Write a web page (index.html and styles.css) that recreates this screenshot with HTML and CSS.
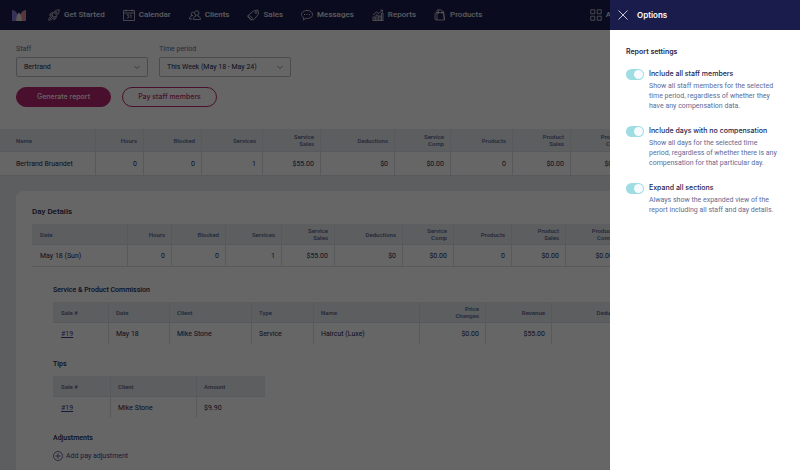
FILE: index.html
```html
<!DOCTYPE html>
<html lang="en">
<head>
<meta charset="utf-8">
<title>Staff compensation</title>
<link rel="stylesheet" href="styles.css">
</head>
<body>
<header class="topbar">
  <a class="logo" href="#" aria-label="Home">
    <svg viewBox="0 0 14 11"><path fill="#8b7fd6" d="M0 .5Q0 0 .6.100C4 1 6 3 7 11H0z"/><path fill="#d98a98" d="M14 .5Q14 0 13.400.1C10 1 8 3 7 11h7z"/><path fill="#e6dcd6" d="M7 2.500C5 4 4.200 7 4.200 11h5.600C9.800 7 9 4 7 2.500z"/></svg>
  </a>
  <nav class="nav">
    <a href="#"><svg class="icon" viewBox="0 0 24 24"><path d="M8 12c2-6 7-10 14.500-10.500C22.500 9 18 14 12 16.500zM8 12l-5 .5L6 8l4.500-.5M12 16.500l-.5 5 4.500-3 .5-4.500M6 15c-3 1-4 3-4.500 7.500C6 22 8 21 9 18M7 13.500l3.500 3.500M4.500 19.500L8 16"/><circle cx="16" cy="8" r="2.300"/></svg>Get Started</a>
    <a href="#"><svg class="icon" viewBox="0 0 24 24"><path d="M1 3h22v20H1zM1 8h22M6 1v4M18 1v4M7.500 11.500H11L9.500 14c3 0 2.500 5-2 4M14 12.500l2-1v7"/></svg>Calendar</a>
    <a href="#"><svg class="icon" viewBox="0 0 24 24"><circle cx="15.500" cy="8" r="4.500"/><path d="M8.500 21c0-4 2-5.500 5-6.500v-2M23 21c0-4-2-5.500-5-6.500v-2M8.500 21H23M8 13.500a3.500 3.500 0 1 1 1.500-6.500M1 20c0-3.500 1-5 4.500-6v-1.500M1 20h5"/></svg>Clients</a>
    <a href="#"><svg class="icon" viewBox="0 0 24 24"><path d="M2 13L13 4l9-2 1 8-9 11-4 1-8-6zM2 13l1 4 7 5M5 13l7 6"/><circle cx="18" cy="7" r="1.800"/></svg>Sales</a>
    <a href="#"><svg class="icon" viewBox="0 0 24 24"><path d="M12 3C5 3 1 6.500 1 11c0 3 2 5.500 5 6.800L4.500 22l5.500-3.200C18 19.500 23 16 23 11s-5-8-11-8z"/><path d="M7 10v2M12 10v2M17 10v2" stroke-width="2"/></svg>Messages</a>
    <a href="#"><svg class="icon" viewBox="0 0 24 24"><path d="M2 23v-7h4v7M8 23V12h4v11M14 23v-9h4v9M19 23V8h3v15M1 23h22M2 12l7-6 5 3 7-7M17 2h4v4"/></svg>Reports</a>
    <a href="#"><svg class="icon" viewBox="0 0 24 24"><path d="M6 7h13l2 15H6zM6 7L2 9v12l4 1M9 10V5c0-5 7-5 7 0v5M6 7V3c0-2 4-2 5-1M16 7l3-2 2 17"/></svg>Products</a>
  </nav>
  <a class="apps" href="#"><svg class="icon" viewBox="0 0 24 24"><path d="M1.500 1.500h8v8h-8zM14.500 1.500h8v8h-8zM1.500 14.500h8v8h-8zM14.500 14.500h8v8h-8z"/></svg>Apps</a>
</header>

<main>
  <form class="filters">
    <div class="fields">
      <div class="field">
        <label for="staff">Staff</label>
        <div class="picker">
          <select id="staff"><option>Bertrand</option></select>
          <svg viewBox="0 0 8 8"><path d="M1.500 3L4 5.500 6.500 3"/></svg>
        </div>
      </div>
      <div class="field">
        <label for="period">Time period</label>
        <div class="picker">
          <select id="period"><option>This Week (May 18 - May 24)</option></select>
          <svg viewBox="0 0 8 8"><path d="M1.500 3L4 5.500 6.500 3"/></svg>
        </div>
      </div>
    </div>
    <div class="actions">
      <button class="btn primary" type="button">Generate report</button>
      <button class="btn outline" type="button">Pay staff members</button>
    </div>
  </form>

  <table class="grid summary">
    <colgroup><col class="w96"><col class="w48"><col class="w58"><col class="w61"><col class="w58"><col class="w74"><col class="w56"><col class="w62"><col class="w58"><col class="w58"><col></colgroup>
    <thead><tr><th class="first">Name</th><th>Hours</th><th>Blocked</th><th>Services</th><th>Service<br>Sales</th><th>Deductions</th><th>Service<br>Comp</th><th>Products</th><th>Product<br>Sales</th><th>Product<br>Comp</th><td></td></tr></thead>
    <tbody><tr><td class="first">Bertrand Bruandet</td><td>0</td><td>0</td><td>1</td><td>$55.00</td><td>$0</td><td>$0.00</td><td>0</td><td>$0.00</td><td>$0.00</td><td></td></tr></tbody>
  </table>

  <section class="card">
    <h2>Day Details</h2>
    <table class="grid days">
      <colgroup><col class="w96"><col class="w44"><col class="w54"><col class="w56"><col class="w53"><col class="w68"><col class="w51"><col class="w58"><col class="w54"><col class="w54"><col></colgroup>
      <thead><tr><th class="first">Date</th><th>Hours</th><th>Blocked</th><th>Services</th><th>Service<br>Sales</th><th>Deductions</th><th>Service<br>Comp</th><th>Products</th><th>Product<br>Sales</th><th>Product<br>Comp</th><td></td></tr></thead>
      <tbody><tr><td class="first">May 18 (Sun)</td><td>0</td><td>0</td><td>1</td><td>$55.00</td><td>$0</td><td>$0.00</td><td>0</td><td>$0.00</td><td>$0.00</td><td></td></tr></tbody>
    </table>

    <div class="details">
      <section>
        <h3>Service &amp; Product Commission</h3>
        <table class="grid sub">
          <colgroup><col class="w56"><col class="w61"><col class="w82"><col class="w62"><col class="w106"><col class="w66"><col class="w66"><col class="w82"><col></colgroup>
          <thead><tr><th class="text">Sale #</th><th class="text">Date</th><th class="text">Client</th><th class="text">Type</th><th class="text">Name</th><th>Price<br>Changes</th><th>Revenue</th><th>Deductions</th><td></td></tr></thead>
          <tbody><tr><td class="text"><a href="#">#19</a></td><td class="text">May 18</td><td class="text">Mike Stone</td><td class="text">Service</td><td class="text">Haircut (Luxe)</td><td>$0.00</td><td>$55.00</td><td></td><td></td></tr></tbody>
        </table>
      </section>
      <section>
        <h3>Tips</h3>
        <table class="grid sub tips">
          <colgroup><col class="w58"><col class="w86"><col class="w68"></colgroup>
          <thead><tr><th class="text">Sale #</th><th class="text">Client</th><th class="text">Amount</th></tr></thead>
          <tbody><tr><td class="text"><a href="#">#19</a></td><td class="text">Mike Stone</td><td class="text">$9.90</td></tr></tbody>
        </table>
      </section>
      <section>
        <h3>Adjustments</h3>
        <button class="add" type="button"><svg viewBox="0 0 20 20"><circle cx="10" cy="10" r="9"/><path d="M10 5v10M5 10h10"/></svg>Add pay adjustment</button>
      </section>
    </div>
  </section>
</main>

<div class="scrim"></div>

<aside class="drawer" aria-label="Options">
  <div class="drawer-head">
    <button class="close" type="button" aria-label="Close"><svg viewBox="0 0 10 10"><path d="M.5.500l9 9M9.500.5l-9 9"/></svg></button>
    <h2>Options</h2>
  </div>
  <div class="drawer-body">
    <h3>Report settings</h3>
    <div class="option">
      <input type="checkbox" id="all-staff" checked>
      <div>
        <label for="all-staff">Include all staff members</label>
        <p>Show all staff members for the selected<br>time period, regardless of whether they<br>have any compensation data.</p>
      </div>
    </div>
    <div class="option">
      <input type="checkbox" id="empty-days" checked>
      <div>
        <label for="empty-days">Include days with no compensation</label>
        <p>Show all days for the selected time<br>period, regardless of whether there is any<br>compensation for that particular day.</p>
      </div>
    </div>
    <div class="option">
      <input type="checkbox" id="expand" checked>
      <div>
        <label for="expand">Expand all sections</label>
        <p>Always show the expanded view of the<br>report including all staff and day details.</p>
      </div>
    </div>
  </div>
</aside>
</body>
</html>
```

FILE: styles.css
```css
* { box-sizing: border-box; }

:root {
  --navy: #1a1d4b;
  --ink: #23264f;
  --muted: #626b94;
  --line: #dadfe6;
  --fill: #e6ebf0;
  --pink: #b8266e;
  --link: #3b3f94;
  --display: Inter, "Liberation Sans", sans-serif;
}

body {
  margin: 0;
  min-height: 100vh;
  overflow: hidden;
  background: var(--fill);
  color: var(--ink);
  font: 400 7px/10px Roboto, "Liberation Sans", sans-serif;
}

h2, h3, p { margin: 0; }
h2 { font-size: 8px; font-weight: 500; }
h3 { font-size: 7px; font-weight: 500; }
button, select { font: inherit; }
svg { display: block; fill: none; stroke: currentColor; }

/* Top navigation */
.topbar {
  display: flex;
  align-items: center;
  height: 30px;
  padding: 0 12px;
  background: var(--navy);
  color: #e0e2ea;
  font-size: 8px;
  font-weight: 500;
}
.topbar a { color: inherit; text-decoration: none; }
.logo { width: 14px; margin-right: 22px; }
.logo svg { width: 14px; height: 11px; stroke: none; }
.nav { display: flex; gap: 18px; }
.nav a, .apps { display: flex; align-items: center; gap: 4px; white-space: nowrap; }
.icon { width: 12px; height: 12px; stroke-width: 1.5; }
.apps { margin-left: auto; margin-right: 164px; }

/* Filters */
.filters { padding: 14px 16px 22px; background: #fff; }
.fields, .actions { display: flex; gap: 11px; }
.field { width: 132px; }
.field label { display: block; color: var(--muted); margin-bottom: 3px; }
.picker { position: relative; }
.picker select {
  display: block;
  appearance: none;
  width: 100%;
  height: 20px;
  padding: 0 7px;
  border: 1px solid #b9bcc6;
  border-radius: 2px;
  background: #fff;
  color: var(--ink);
}
.picker svg { position: absolute; right: 7px; top: 6px; width: 8px; height: 8px; color: #8b8fa5; pointer-events: none; }
.actions { margin-top: 10px; }
.btn { width: 95px; height: 20px; padding: 0; border: 1px solid var(--pink); border-radius: 10px; font-family: var(--display); font-weight: 500; }
.primary { background: var(--pink); color: #fff; }
.outline { background: #fff; color: var(--pink); }

/* Tables */
.grid { width: 100%; table-layout: fixed; border-collapse: separate; border-spacing: 0; background: #fff; }
.grid th, .grid td { padding: 0 6px 0 0; height: 21px; text-align: right; white-space: nowrap; border-right: 1px solid var(--line); }
.grid th { color: var(--muted); font-size: 6px; line-height: 7px; font-weight: 600; }
.grid thead th, .grid thead td { background: var(--fill); border-bottom: 1px solid var(--line); }
.grid tr > :last-child { border-right: 0; }
.grid .first, .grid .text { text-align: left; padding: 0 0 0 8px; }
.grid .text + .text { padding-left: 7px; }
.grid a { color: var(--link); }
.summary .first { padding-left: 16px; }
.summary thead th, .summary thead td { height: 23px; }
.summary tbody td { height: 24px; border-bottom: 1px solid var(--line); }
.days tbody td { height: 22px; border-bottom: 1px solid var(--line); }
.tips { width: 212px; }

.w44 { width: 44px; } .w48 { width: 48px; } .w51 { width: 51px; } .w53 { width: 53px; }
.w54 { width: 54px; } .w56 { width: 56px; } .w58 { width: 58px; } .w61 { width: 61px; }
.w62 { width: 62px; } .w66 { width: 66px; } .w68 { width: 68px; } .w74 { width: 74px; }
.w82 { width: 82px; } .w86 { width: 86px; } .w96 { width: 96px; } .w106 { width: 106px; }

/* Day details */
.card { margin: 15px 16px 0; padding: 16px 16px 24px; border-radius: 8px; background: #fff; }
.card h2 { margin-bottom: 7px; }
.details { display: grid; gap: 15px; margin-left: 21px; padding-top: 18px; }
.details h3 { margin-bottom: 7px; }
.add { display: flex; align-items: center; gap: 3px; padding: 1px 0; border: 0; background: none; color: var(--link); }
.add svg { width: 10px; height: 10px; stroke-width: 1.5; }

/* Overlay and drawer */
.scrim { position: fixed; inset: 0; background: rgba(0, 0, 0, .6); }
.drawer { position: fixed; top: 0; right: 0; bottom: 0; width: 190px; background: #fff; }
.drawer-head { display: flex; align-items: center; gap: 9px; height: 30px; padding-left: 8px; background: var(--navy); color: #fff; }
.close { padding: 0; border: 0; background: none; color: #c3c5d6; }
.close svg { width: 10px; height: 10px; }
.drawer-body { padding: 17px 16px; }
.drawer h2, .drawer h3 { font-family: var(--display); font-weight: 600; }
.drawer-body h3 { margin-bottom: 11px; }
.option { display: flex; gap: 5px; margin-bottom: 14px; }
.option label { display: block; line-height: 12px; margin-bottom: 1px; font-family: var(--display); font-weight: 500; }
.option p { color: var(--muted); white-space: nowrap; }
.option input {
  appearance: none;
  flex: none;
  display: flex;
  justify-content: flex-end;
  width: 18px;
  height: 11px;
  margin: 1px 0 0;
  padding: 1px;
  border-radius: 6px;
  background: #9edde2;
}
.option input::before { content: ""; width: 9px; height: 9px; border-radius: 50%; background: #f7fbff; }
.option input:not(:checked) { justify-content: flex-start; background: #c6cad6; }
```
